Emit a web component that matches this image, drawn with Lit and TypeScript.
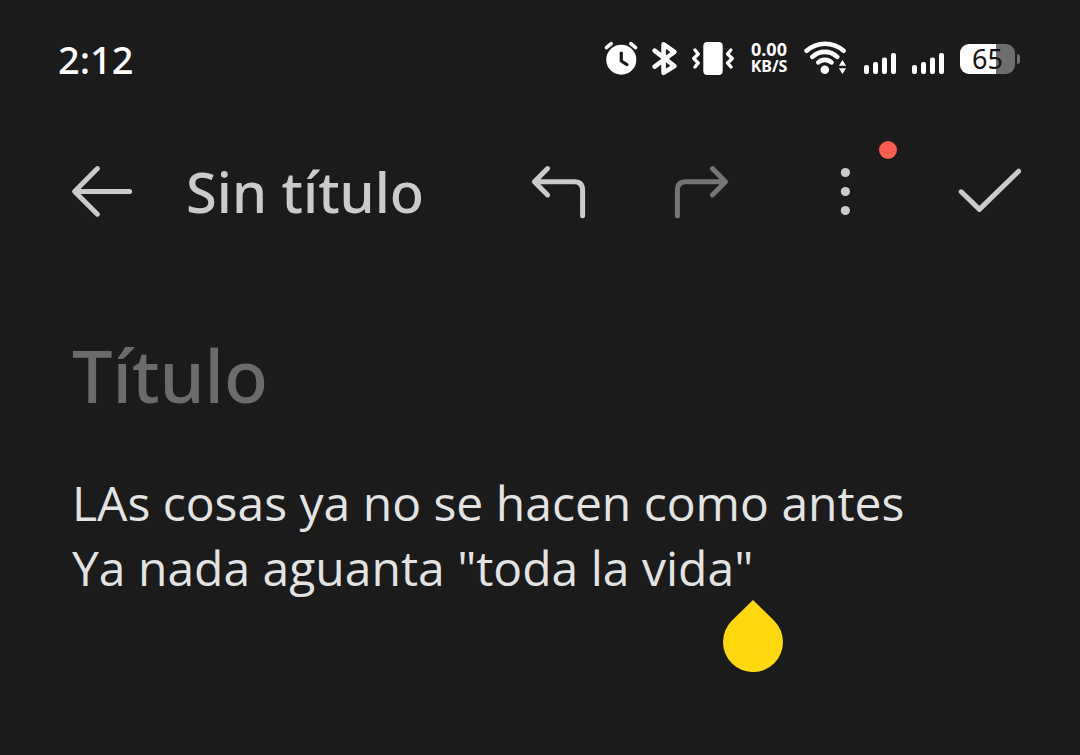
import { LitElement, html, css, svg } from "lit";
import { customElement, property, state } from "lit/decorators.js";

@customElement("status-bar")
export class StatusBar extends LitElement {
  @property() time = "2:12";
  @property({ type: Number }) battery = 65;

  static styles = css`
    :host {
      display: flex;
      align-items: center;
      justify-content: space-between;
      height: 36px;
      padding: 41px 60px 0 58px;
      color: #fff;
    }
    .time {
      font-size: 38px;
      line-height: 38px;
      font-weight: 500;
    }
    .icons {
      display: flex;
      align-items: center;
      gap: 15px;
    }
    svg {
      display: block;
      height: 36px;
    }
    .speed {
      display: flex;
      flex-direction: column;
      align-items: center;
      width: 40px;
      height: 36px;
      font-weight: 700;
      font-size: 16px;
      line-height: 17px;
    }
    .rate {
      font-size: 18px;
    }
    .battery {
      display: flex;
      align-items: center;
      gap: 2px;
    }
    .cell {
      width: 55px;
      height: 30px;
      border-radius: 9px;
      color: #141414;
      font-size: 27px;
      line-height: 30px;
      text-align: center;
    }
    .nub {
      width: 3px;
      height: 10px;
      border-radius: 0 3px 3px 0;
      background: #6e6e6e;
    }
  `;

  private signal() {
    return html`<svg width="33" viewBox="0 0 33 36" fill="#fff" aria-hidden="true">
      <rect x="0" y="24" width="5" height="9" rx="2" />
      <rect x="9" y="21" width="5" height="12" rx="2" />
      <rect x="18" y="16.5" width="5" height="16.5" rx="2" />
      <rect x="27" y="12" width="5" height="21" rx="2" />
    </svg>`;
  }

  render() {
    const fill = `background: linear-gradient(90deg, #fff ${this.battery}%, #6e6e6e ${this.battery}%)`;
    return html`
      <span class="time">${this.time}</span>
      <div class="icons">
        <svg width="33" viewBox="0 0 33 36" overflow="visible" fill="none" stroke-linecap="round" stroke-linejoin="round" aria-hidden="true">
          <circle cx="17.3" cy="18.7" r="15" fill="#fff" />
          <path d="M2.4 6.6 7.2 2.6M26.8 2.6l4.8 4" stroke="#fff" stroke-width="3.6" />
          <path d="M17.3 12v8l5.6 3.6" stroke="#1b1b1b" stroke-width="3.2" />
        </svg>
        <svg width="25" viewBox="0 0 25 36" overflow="visible" fill="none" stroke="#fff" stroke-width="4.6" stroke-linecap="round" stroke-linejoin="round" aria-hidden="true">
          <path d="M2.6 9.6 22.4 25 11.6 31.8V3.4L22.4 11 2.6 25.6" />
        </svg>
        <svg width="42" viewBox="0 0 42 36" fill="none" stroke="#fff" stroke-width="3.4" stroke-linecap="round" stroke-linejoin="round" aria-hidden="true">
          <rect x="11.3" y="1" width="19.4" height="33" rx="4" fill="#fff" stroke="none" />
          <path d="M3 9l3.2 4-4.4 4.5L6.2 22 3 26M38.8 9l-3.2 4 4.6 4.5-4.6 4.5 3.4 4" />
        </svg>
        <div class="speed"><span class="rate">0.00</span><span>KB/S</span></div>
        <svg width="45" viewBox="0 0 45 36" fill="none" stroke="#fff" stroke-width="4.6" stroke-linecap="round" aria-hidden="true">
          <path d="M2.6 9.8A27.6 27.6 0 0 1 39.6 9.8M8.4 15.8A18 18 0 0 1 33.2 15.8M14.4 21.4A9.6 9.6 0 0 1 27.4 21.4" />
          <circle cx="20.8" cy="28.8" r="4.3" fill="#fff" stroke="none" />
          <path d="M38.5 19l3.6 5.8h-7.2zM34.9 27.3h7.2L38.5 33z" fill="#fff" stroke="none" />
        </svg>
        ${this.signal()} ${this.signal()}
        <div class="battery">
          <div class="cell" style=${fill}>${this.battery}</div>
          <div class="nub"></div>
        </div>
      </div>
    `;
  }
}

@customElement("app-root")
export class AppRoot extends LitElement {
  @state() private heading = "";
  @state() private body = 'LAs cosas ya no se hacen como antes\nYa nada aguanta "toda la vida"';

  static styles = css`
    :host {
      display: block;
      min-height: 100vh;
      background: #1b1b1b;
      color: #e3e3e3;
      font-family: "Noto Sans", "Open Sans", sans-serif;
    }
    .toolbar {
      display: flex;
      align-items: center;
      height: 64px;
      margin-top: 82px;
      padding: 0 58px 0 70px;
      color: #cbcbcb;
    }
    .name {
      flex: 1;
      margin: 0 0 0 52px;
      font-size: 56px;
      line-height: 66px;
      font-weight: 500;
      white-space: nowrap;
    }
    .actions {
      display: flex;
      gap: 80px;
    }
    button {
      position: relative;
      display: block;
      width: 64px;
      height: 64px;
      padding: 0;
      border: 0;
      background: none;
      color: inherit;
    }
    button:disabled {
      color: #757575;
    }
    button svg {
      display: block;
    }
    .badge {
      position: absolute;
      top: -18px;
      right: -19px;
      width: 18px;
      height: 18px;
      border-radius: 50%;
      background: #ff5c50;
    }
    .note {
      padding: 104px 72px 0;
    }
    .title,
    .text {
      display: block;
      box-sizing: border-box;
      width: 100%;
      padding: 0;
      border: 0;
      outline: 0;
      background: none;
      color: inherit;
      font-family: inherit;
    }
    .title {
      height: 96px;
      font-size: 72px;
      line-height: 96px;
      font-weight: 500;
    }
    .title::placeholder {
      color: #6b6b6b;
      opacity: 1;
    }
    .editor {
      position: relative;
      margin-top: 47px;
    }
    .text {
      font-family: "Open Sans", "Noto Sans", sans-serif;
      font-size: 48px;
      line-height: 65px;
      resize: none;
      overflow: hidden;
    }
    .handle {
      position: absolute;
      top: 130px;
      left: 651px;
    }
  `;

  private icon(shape: unknown) {
    return html`<svg width="64" height="64" viewBox="0 0 64 64" fill="none" stroke="currentColor" stroke-width="5" stroke-linecap="round" stroke-linejoin="round" aria-hidden="true">${shape}</svg>`;
  }

  render() {
    return html`
      <status-bar></status-bar>
      <header class="toolbar">
        <button type="button" aria-label="Atrás">
          ${this.icon(svg`<path d="M27.4 9.6 4.6 32.4 27.4 55.2M5 32.4h54.6" />`)}
        </button>
        <h1 class="name">Sin título</h1>
        <div class="actions">
          <button type="button" aria-label="Deshacer">
            ${this.icon(svg`<path d="M21.6 9.6 8.4 22.7l13.2 13.2M9 22.7h39.2q8.4 0 8.4 8.4v25.6" />`)}
          </button>
          <button type="button" aria-label="Rehacer" disabled>
            ${this.icon(svg`<path d="M42.4 9.6 55.5 22.7 42.4 35.9M55 22.7H15.8q-8.4 0-8.4 8.4v25.6" />`)}
          </button>
          <button type="button" aria-label="Más opciones">
            ${this.icon(svg`<g fill="currentColor" stroke="none"><circle cx="31.4" cy="13.5" r="4.6" /><circle cx="31.4" cy="32.5" r="4.6" /><circle cx="31.4" cy="51.5" r="4.6" /></g>`)}
            <span class="badge"></span>
          </button>
          <button type="button" aria-label="Guardar">
            ${this.icon(svg`<path d="M3.2 32.8 21.4 50.4 60.6 12.2" />`)}
          </button>
        </div>
      </header>
      <main class="note">
        <input
          class="title"
          type="text"
          aria-label="Título"
          placeholder="Título"
          .value=${this.heading}
          @input=${(e: Event) => (this.heading = (e.target as HTMLInputElement).value)}
        />
        <div class="editor">
          <textarea
            class="text"
            aria-label="Nota"
            rows="3"
            spellcheck="false"
            .value=${this.body}
            @input=${(e: Event) => (this.body = (e.target as HTMLTextAreaElement).value)}
          ></textarea>
          <svg class="handle" width="60" height="72" viewBox="0 0 60 72" aria-hidden="true">
            <path d="M30 0 51.2 20.8A30 30 0 1 1 8.8 20.8Z" fill="#ffd90d" />
          </svg>
        </div>
      </main>
    `;
  }
}
